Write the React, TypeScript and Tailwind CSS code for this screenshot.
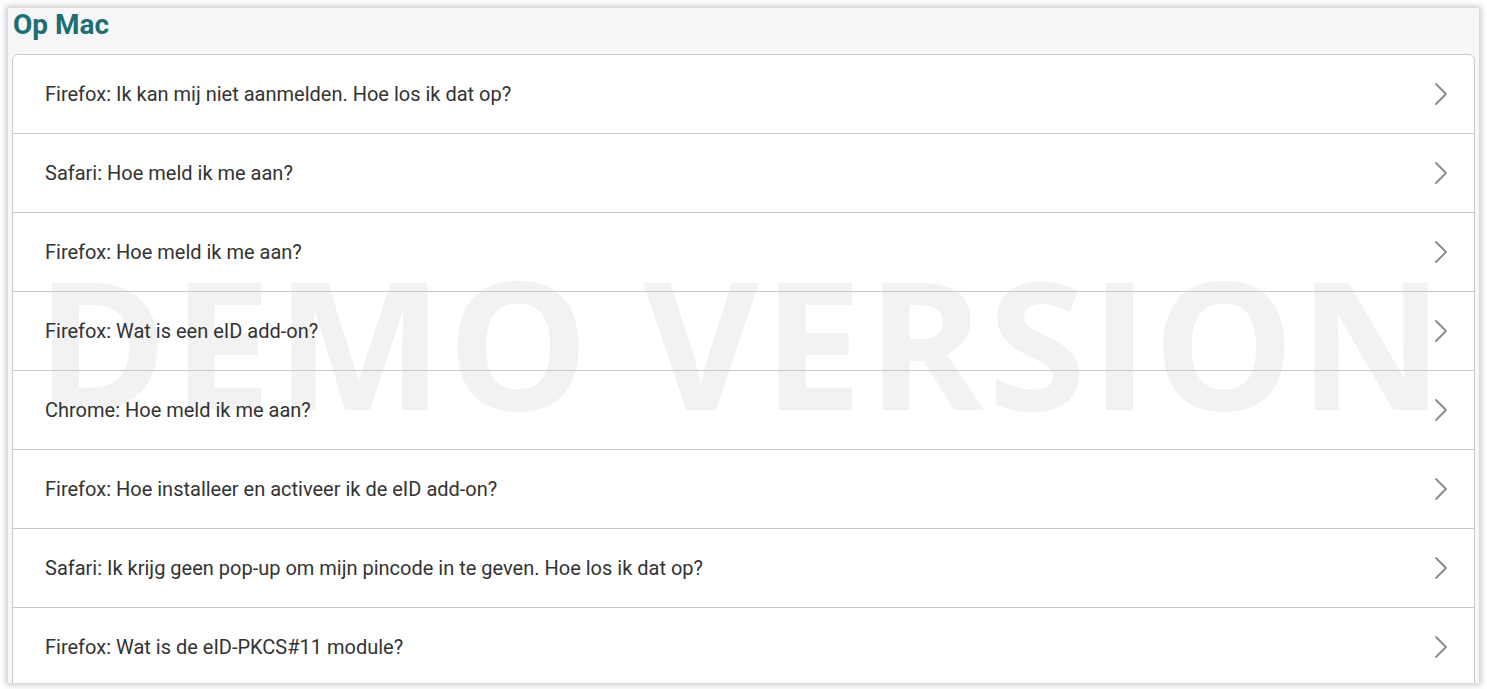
import React from "react";

const items = [
  "Firefox: Ik kan mij niet aanmelden. Hoe los ik dat op?",
  "Safari: Hoe meld ik me aan?",
  "Firefox: Hoe meld ik me aan?",
  "Firefox: Wat is een eID add-on?",
  "Chrome: Hoe meld ik me aan?",
  "Firefox: Hoe installeer en activeer ik de eID add-on?",
  "Safari: Ik krijg geen pop-up om mijn pincode in te geven. Hoe los ik dat op?",
  "Firefox: Wat is de eID-PKCS#11 module?",
];

function Chevron() {
  return (
    <svg width="14" height="24" viewBox="0 0 14 24" fill="none" className="shrink-0">
      <path d="M2 2 L12 12 L2 22" stroke="#8a8a8a" strokeWidth="1.8" strokeLinecap="round" strokeLinejoin="round" />
    </svg>
  );
}

export default function App() {
  return (
    <div className="bg-white w-[1487px] h-[689px] pt-[8px] pl-[8px]" style={{ fontFamily: "Roboto, 'Noto Sans', sans-serif" }}>
      <div className="relative w-[1471px] h-[675px] overflow-hidden bg-[#f7f7f9] shadow-[0_0_6px_2px_rgba(0,0,0,0.22)] px-[4px]">
        <h2 className="h-[46px] pt-[1px] pl-[1px] text-[28px] leading-[32px] font-bold text-[#1c6f73]">Op Mac</h2>
        <div className="relative bg-white border border-[#c9c9c9] rounded-t-[6px]">
          <div
            className="pointer-events-none absolute left-[23px] top-[197px] text-[178px] leading-none font-bold text-[#f2f2f2] whitespace-nowrap tracking-[4px] select-none"
            style={{ fontFamily: "'Open Sans', sans-serif" }}
          >
            DEMO VERSION
          </div>
          {items.map((t, i) => (
            <div
              key={i}
              className={`relative flex items-center justify-between pl-[32px] pr-[26px] ${i > 0 ? "h-[79px] border-t border-[#c9c9c9]" : "h-[78px]"}`}
            >
              <span className="text-[20px] text-[#333333]">{t}</span>
              <Chevron />
            </div>
          ))}
        </div>
      </div>
    </div>
  );
}
